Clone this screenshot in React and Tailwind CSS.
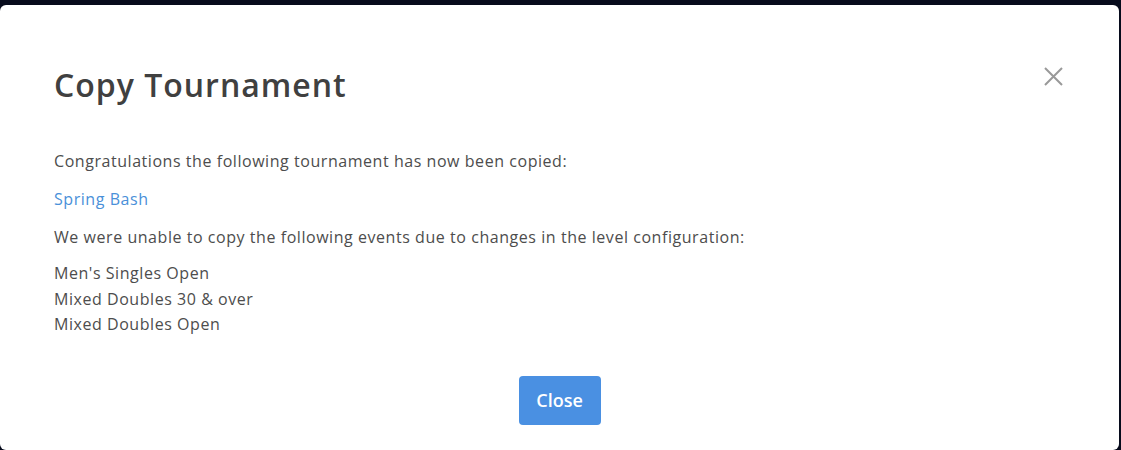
import React from 'react';

const skipped = ["Men's Singles Open", 'Mixed Doubles 30 & over', 'Mixed Doubles Open'];

const CloseIcon = () => (
  <svg width="19" height="19" viewBox="0 0 19 19" fill="none" stroke="#999999" strokeWidth="2">
    <path d="M1 1L18 18M18 1L1 18" />
  </svg>
);

export default function App() {
  return (
    <div className="w-[1121px] h-[450px] bg-[#070b1c] pt-[5px] pr-[2px] overflow-hidden" style={{ fontFamily: '"Open Sans", Lato, sans-serif' }}>
      <div className="h-[445px] bg-white rounded-[6px] flex flex-col pl-[54px] pr-[56px]">
        <div className="flex items-start justify-between pt-[56px]">
          <h1 className="text-[32px] leading-[48px] font-semibold tracking-[1px] text-[#404040]">Copy Tournament</h1>
          <button className="mt-[6px]">
            <CloseIcon />
          </button>
        </div>
        <div className="mt-[40px] text-[16px] leading-[25px] tracking-[0.55px] text-[#4d4d4d]">
          <p>Congratulations the following tournament has now been copied:</p>
          <p className="mt-[13px] text-[#4a90d9]">Spring Bash</p>
          <p className="mt-[13px]">We were unable to copy the following events due to changes in the level configuration:</p>
          <ul className="mt-[11px] leading-[25.5px]">
            {skipped.map((e) => (
              <li key={e}>{e}</li>
            ))}
          </ul>
        </div>
        <div className="flex justify-center mt-[38px] pl-[2px]">
          <button className="w-[82px] h-[49px] rounded-[4px] bg-[#4a90e2] text-white text-[18px] font-semibold">Close</button>
        </div>
      </div>
    </div>
  );
}
